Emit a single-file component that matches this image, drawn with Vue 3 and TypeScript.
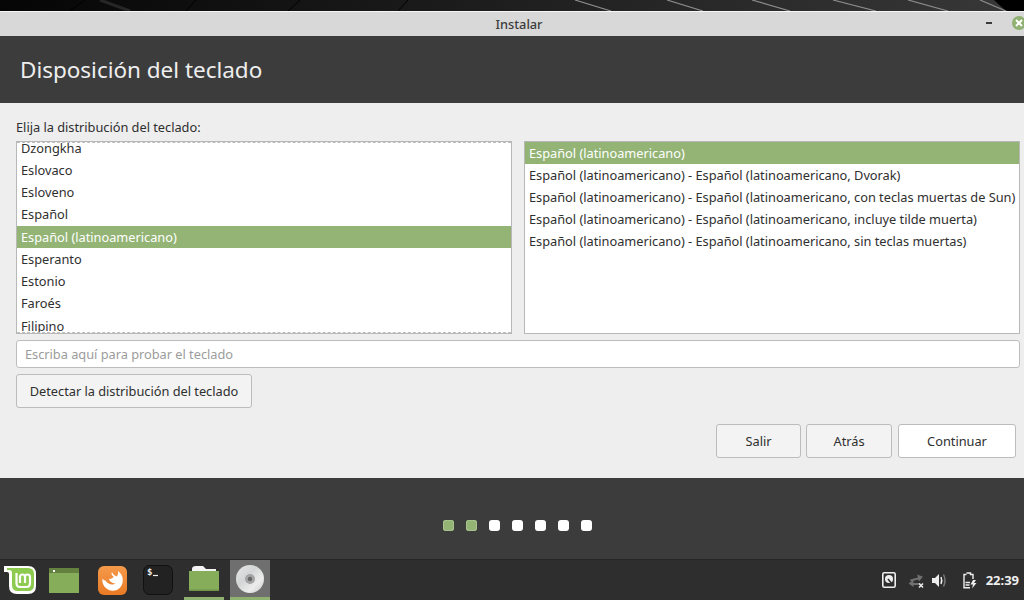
<script setup lang="ts">
const layouts = ["Dzongkha", "Eslovaco", "Esloveno", "Español", "Español (latinoamericano)", "Esperanto", "Estonio", "Faroés", "Filipino"];
const variants = [
  "Español (latinoamericano)",
  "Español (latinoamericano) - Español (latinoamericano, Dvorak)",
  "Español (latinoamericano) - Español (latinoamericano, con teclas muertas de Sun)",
  "Español (latinoamericano) - Español (latinoamericano, incluye tilde muerta)",
  "Español (latinoamericano) - Español (latinoamericano, sin teclas muertas)",
];
const steps = [true, true, false, false, false, false, false];
</script>

<template>
  <div class="screen">
    <svg class="wallpaper" width="1024" height="11" viewBox="0 0 1024 11">
      <defs>
        <linearGradient id="wall" x1="0" y1="0" x2="1" y2="0">
          <stop offset="0" stop-color="#050505" />
          <stop offset="1" stop-color="#383838" />
        </linearGradient>
      </defs>
      <rect width="1024" height="11" fill="url(#wall)" />
      <path d="M994 0 1006 11H1024V0Z" fill="#000" />
      <path d="M69 11 85 0M186 11 196 0M288 11 300 0M398 11 408 0" stroke="#000" stroke-width="1" fill="none" />
      <path d="M100 0 130 11" stroke="#262626" stroke-width="3" fill="none" />
      <path d="M575 0 611 11M667 0 703 11M752 0 790 11M833 0 876 11M908 0 948 11M980 0 1006 11" stroke="#8c8c8c" stroke-width="1.2" fill="none" />
    </svg>

    <section class="window">
      <div class="titlebar">
        <span>Instalar</span>
        <i class="minimize"></i>
        <svg class="close" width="14" height="14" viewBox="0 0 14 14">
          <circle cx="7" cy="7" r="7" fill="#8fb171" />
          <path d="M4 4 10 10M10 4 4 10" stroke="#fff" stroke-width="2" />
        </svg>
      </div>
      <header class="heading">Disposición del teclado</header>

      <main class="content">
        <p class="prompt">Elija la distribución del teclado:</p>
        <div class="lists">
          <div class="list left">
            <div class="rows">
              <div v-for="name in layouts" :key="name" class="row" :class="{ selected: name === 'Español (latinoamericano)' }">{{ name }}</div>
            </div>
            <i class="edge top"></i>
            <i class="edge bottom"></i>
          </div>
          <div class="list right">
            <div v-for="(name, i) in variants" :key="name" class="row" :class="{ selected: i === 0 }">{{ name }}</div>
          </div>
        </div>
        <input class="tester" type="text" placeholder="Escriba aquí para probar el teclado" />
        <div><button class="btn detect">Detectar la distribución del teclado</button></div>
        <div class="actions">
          <button class="btn salir">Salir</button>
          <button class="btn atras">Atrás</button>
          <button class="btn continuar">Continuar</button>
        </div>
      </main>

      <footer class="progress">
        <i v-for="(done, i) in steps" :key="i" class="dot" :class="{ done }"></i>
      </footer>
    </section>

    <nav class="panel">
      <div class="launchers">
        <span class="launcher mint">
          <svg width="33" height="30" viewBox="0 0 33 30">
            <path d="M0 1H24Q32 1 32 9V21Q32 29 24 29H13Q5 29 5 21V9Q5 7 3 7H0Z" fill="#fff" />
            <path d="M3 3H24Q30 3 30 9V20Q30 26 24 26H14Q8 26 8 20V8Q8 5 5 5H3Z" fill="#8ccb4f" />
            <path d="M12.500 8V18Q12.500 22 16 22H22.500Q26 22 26 18V12Q26 9.500 23.500 9.500T21 12V18M21 12Q21 9.500 18.500 9.500T16 12V18" fill="none" stroke="#fff" stroke-width="2.2" />
          </svg>
        </span>
        <span class="launcher files">
          <svg width="30" height="25" viewBox="0 0 30 25">
            <rect width="30" height="25" fill="#86ad5a" />
            <rect width="30" height="5" fill="#64813f" />
            <rect x="4" y="2" width="2" height="2" fill="#fff" />
          </svg>
        </span>
        <span class="launcher firefox">
          <svg width="29" height="29" viewBox="0 0 29 29">
            <defs>
              <linearGradient id="fx" x1="0" y1="0" x2="0" y2="1">
                <stop offset="0" stop-color="#f59a4b" />
                <stop offset="1" stop-color="#ea7a24" />
              </linearGradient>
            </defs>
            <rect width="29" height="29" rx="6" fill="url(#fx)" />
            <path d="M20 5C24 8 25.500 12 24.500 17 23 23 17.500 25.500 13 24.500 7.500 23.500 3.500 18 4.500 12.500 5.500 14 6.500 14.500 7.500 14.500 9.500 18 14 19.500 18 17.500 14.500 17.500 11.500 15.500 11 13 13.500 13 15.500 12 15.500 10.500 13.500 9.500 13 7.500 14 6 14.500 8 17 9.500 18.500 10.500 20 9.500 20.500 7 20 5Z" fill="#fff" />
          </svg>
        </span>
        <span class="launcher terminal">
          <svg width="30" height="30" viewBox="0 0 30 30">
            <rect x=".5" y=".5" width="29" height="29" rx="6" fill="#222" stroke="#111" />
            <text x="4" y="10" class="prompt-mark">$</text>
            <path d="M10 10.500H15" stroke="#eee" stroke-width="1.200" fill="none" />
          </svg>
        </span>
        <span class="launcher folder running">
          <svg width="30" height="25" viewBox="0 0 30 25">
            <path d="M7 0H14L17 3H27V7H3V3Q3 0 7 0Z" fill="#f4f4f4" />
            <path d="M0 5H30V25H0Z" fill="#86ad5a" />
            <rect y="23.500" width="30" height="1.500" fill="#6f9449" />
          </svg>
        </span>
        <span class="launcher disc running active">
          <svg width="28" height="28" viewBox="0 0 28 28">
            <defs>
              <linearGradient id="cd" x1="0" y1="0" x2="1" y2="1">
                <stop offset="0" stop-color="#e8e8e8" />
                <stop offset=".4" stop-color="#d3d5d6" />
                <stop offset=".7" stop-color="#ededed" />
                <stop offset="1" stop-color="#c6c6c6" />
              </linearGradient>
            </defs>
            <circle cx="14" cy="14" r="14" fill="url(#cd)" />
            <circle cx="14" cy="14" r="5" fill="#a4a4a4" />
            <circle cx="14" cy="14" r="2.200" fill="#666" />
          </svg>
        </span>
      </div>
      <div class="tray">
        <svg width="14" height="16" viewBox="0 0 14 16">
          <rect x=".8" y=".8" width="12.400" height="14.400" rx="1.500" fill="none" stroke="#eee" stroke-width="1.600" />
          <circle cx="7" cy="7" r="4" fill="#eee" />
          <path d="M6 7 10 12" stroke="#2e2e2e" stroke-width="1.600" />
        </svg>
        <svg class="net" width="16" height="16" viewBox="0 0 16 16">
          <path d="M2 6H10V3L15 6.500 10 10V8H2Z" fill="#707070" transform="rotate(-14 8 6)" />
          <path d="M14 10H6V7L1 10.500 6 14V12H10" fill="#707070" transform="translate(-.5 1)" />
          <path d="M11 11.500 15 15.500M15 11.500 11 15.500" stroke="#eee" stroke-width="1.500" />
        </svg>
        <svg class="vol" width="16" height="15" viewBox="0 0 16 15">
          <path d="M0 5H3L7 1V14L3 10H0Z" fill="#eee" />
          <path d="M9 4Q10.500 7.500 9 11" stroke="#eee" stroke-width="1.500" fill="none" />
          <path d="M11.500 1.500Q14.500 7.500 11.500 13.500" stroke="#777" stroke-width="1.500" fill="none" />
        </svg>
        <svg class="battery" width="15" height="17" viewBox="0 0 15 17">
          <path d="M4.500 1H8.500V2.500H11V7M8 15.800H2V2.500H4.500" fill="none" stroke="#eee" stroke-width="1.400" />
          <path d="M3.500 13H7.500M3.500 10.500H8" stroke="#eee" stroke-width="1.300" />
          <path d="M11 8 8.500 12.500H11L10 16.500 14.500 11H12L14 8Z" fill="#eee" />
        </svg>
        <span class="clock">22:39</span>
      </div>
    </nav>
  </div>
</template>

<style>
html, body {
  margin: 0;
  background: #0c0c0c;
}
</style>

<style scoped>
.screen {
  width: 1024px;
  height: 600px;
  display: flex;
  flex-direction: column;
  overflow: hidden;
  font-family: "Noto Sans", "Open Sans", sans-serif;
  font-size: 12.8px;
  letter-spacing: -0.02px;
  color: #2f2f2f;
}

.wallpaper {
  display: block;
  flex: none;
}

.window {
  flex: 1;
  display: flex;
  flex-direction: column;
}

.titlebar {
  height: 25px;
  box-sizing: border-box;
  border-top: 1px solid #f6f6f6;
  background: #d8d8d8;
  display: flex;
  align-items: center;
  justify-content: center;
  position: relative;
  padding-left: 14px;
  font-weight: 500;
  color: #3c3c3c;
}

.minimize {
  position: absolute;
  left: 986px;
  top: 10px;
  width: 6px;
  height: 2px;
  background: #3a3a3a;
}

.close {
  position: absolute;
  left: 1012px;
  top: 4px;
}

.heading {
  height: 67px;
  background: #3c3c3c;
  color: #eeeeee;
  font-size: 22.5px;
  line-height: 67px;
  padding-left: 20px;
}

.content {
  height: 375px;
  box-sizing: border-box;
  background: #eeeeee;
  padding: 15px 4px 0 16px;
  display: flex;
  flex-direction: column;
}

.prompt {
  margin: 0;
  height: 23px;
  line-height: 18px;
}

.lists {
  display: flex;
  gap: 12px;
}

.list {
  width: 496px;
  height: 193px;
  box-sizing: border-box;
  border: 1px solid #b8b8b8;
  background: #fff;
  overflow: hidden;
  position: relative;
}

.rows {
  margin-top: -5.3px;
}

.row {
  height: 22px;
  line-height: 22px;
  padding-left: 4px;
  white-space: nowrap;
}

.left .row {
  height: 22.25px;
  line-height: 22.25px;
}

.row.selected {
  background: #93b475;
  color: #fff;
}

.edge {
  position: absolute;
  left: 0;
  right: 0;
  border-top: 1px dashed #bdbdbd;
}

.edge.top {
  top: 0;
}

.edge.bottom {
  bottom: 0;
}

.tester {
  margin-top: 6px;
  width: 1004px;
  height: 28px;
  box-sizing: border-box;
  border: 1px solid #bdbdbd;
  border-radius: 3px;
  background: #fff;
  padding: 0 8px;
  font: inherit;
  letter-spacing: inherit;
}

.tester::placeholder {
  color: #9c9c9c;
}

.btn {
  box-sizing: border-box;
  height: 34px;
  border: 1px solid #bcbcbc;
  border-radius: 3px;
  background: #f3f3f3;
  font: inherit;
  letter-spacing: inherit;
  color: #2f2f2f;
  padding: 0;
}

.detect {
  margin-top: 6px;
  width: 236px;
}

.actions {
  margin-top: 16px;
  padding-right: 4px;
  display: flex;
  justify-content: flex-end;
  gap: 5px;
}

.salir {
  width: 85px;
}

.atras {
  width: 86px;
}

.continuar {
  width: 118px;
  margin-left: 1px;
  background: #fff;
}

.progress {
  height: 81px;
  background: #3c3c3c;
  display: flex;
  align-items: flex-start;
  justify-content: center;
  gap: 12px;
  padding: 42px 0 0 10px;
  box-sizing: border-box;
}

.dot {
  width: 11px;
  height: 11px;
  border-radius: 3px;
  background: #fff;
}

.dot.done {
  background: #93b475;
  box-shadow: inset 0 0 0 1px #a8c48d;
}

.panel {
  height: 41px;
  flex: none;
  background: #2e2e2e;
  border-top: 1px solid #262626;
  box-sizing: border-box;
  display: flex;
  justify-content: space-between;
  align-items: center;
}

.launchers {
  display: flex;
  height: 100%;
  padding-left: 4px;
}

.launcher {
  height: 100%;
  display: flex;
  align-items: center;
  justify-content: center;
  box-sizing: border-box;
}

.mint {
  width: 33px;
}

.files {
  width: 54px;
}

.firefox {
  width: 43px;
}

.terminal {
  width: 47px;
}

.folder {
  width: 40px;
  margin-left: 3px;
}

.disc {
  width: 40px;
  margin-left: 6px;
}

.running {
  border-bottom: 3px solid #8fb171;
}

.active {
  background: #6f6f6f;
}

.prompt-mark {
  font-family: "DejaVu Sans Mono", monospace;
  font-size: 9px;
  font-weight: 700;
  fill: #eeeeee;
}

.tray {
  display: flex;
  align-items: center;
  gap: 8px;
  padding-right: 5px;
}

.tray .net {
  margin-left: 4px;
}

.tray .battery {
  margin-left: 6px;
}

.clock {
  font-size: 13px;
  font-weight: 700;
  color: #eeeeee;
  margin-left: 1px;
}
</style>
